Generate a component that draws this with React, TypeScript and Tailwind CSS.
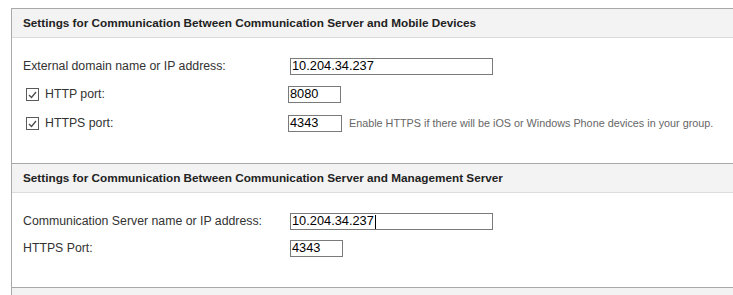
const FONT = { fontFamily: '"Liberation Sans", Arial, sans-serif' };

function SectionHeader({ title, top }: { title: string; top?: boolean }) {
  return (
    <div
      className={`flex h-[29px] items-center border-b border-[#dcdcdc] bg-[#f3f3f3] pl-[11px] text-[11.75px] font-bold text-[#222] ${
        top ? "" : "border-t border-t-[#a9a9a9] h-[30px]"
      }`}
    >
      {title}
    </div>
  );
}

function TextBox({ value, width, caret }: { value: string; width: string; caret?: boolean }) {
  return (
    <div
      className={`flex h-[17px] items-center border border-[#7a7a7a] bg-white pl-[1px] text-[12.8px] leading-none text-black ${width}`}
    >
      {value}
      {caret && <span className="ml-[1px] inline-block h-[14px] w-[1px] bg-black" />}
    </div>
  );
}

function Check() {
  return (
    <span className="flex h-[13px] w-[13px] items-center justify-center border border-[#5a5a5a] bg-white">
      <svg width="9" height="8" viewBox="0 0 9 8">
        <path d="M1 4 L3.5 6.5 L8 1" fill="none" stroke="#4a4a4a" strokeWidth="1.3" />
      </svg>
    </span>
  );
}

export default function App() {
  return (
    <div className="h-[295px] w-[733px] overflow-hidden bg-white pl-[11px] pt-[8px]" style={FONT}>
      <div className="border-l border-t border-[#a9a9a9]">
        <SectionHeader top title="Settings for Communication Between Communication Server and Mobile Devices" />
        <div className="h-[125px] pl-[11px] pt-[20px] text-[12.3px] text-[#333]">
          <div className="flex h-[17px] items-center">
            <span className="w-[267px]">External domain name or IP address:</span>
            <TextBox value="10.204.34.237" width="w-[203px]" />
          </div>
          <div className="mt-[11px] flex h-[17px] items-center">
            <span className="flex w-[265px] items-center pl-[3px]">
              <Check />
              <span className="ml-[6px]">HTTP port:</span>
            </span>
            <TextBox value="8080" width="w-[53px]" />
          </div>
          <div className="mt-[12px] flex h-[17px] items-center">
            <span className="flex w-[265px] items-center pl-[3px]">
              <Check />
              <span className="ml-[6px]">HTTPS port:</span>
            </span>
            <TextBox value="4343" width="w-[54px]" />
            <span className="ml-[7px] text-[10.8px] text-[#666]">
              Enable HTTPS if there will be iOS or Windows Phone devices in your group.
            </span>
          </div>
        </div>
        <SectionHeader title="Settings for Communication Between Communication Server and Management Server" />
        <div className="h-[94px] pl-[11px] pt-[20px] text-[12.3px] text-[#333]">
          <div className="flex h-[17px] items-center">
            <span className="w-[267px]">Communication Server name or IP address:</span>
            <TextBox value="10.204.34.237" width="w-[203px]" caret />
          </div>
          <div className="mt-[10px] flex h-[17px] items-center">
            <span className="w-[267px]">HTTPS Port:</span>
            <TextBox value="4343" width="w-[53px]" />
          </div>
        </div>
        <div className="h-[20px] border-t border-[#a9a9a9] bg-[#f3f3f3]" />
      </div>
    </div>
  );
}
